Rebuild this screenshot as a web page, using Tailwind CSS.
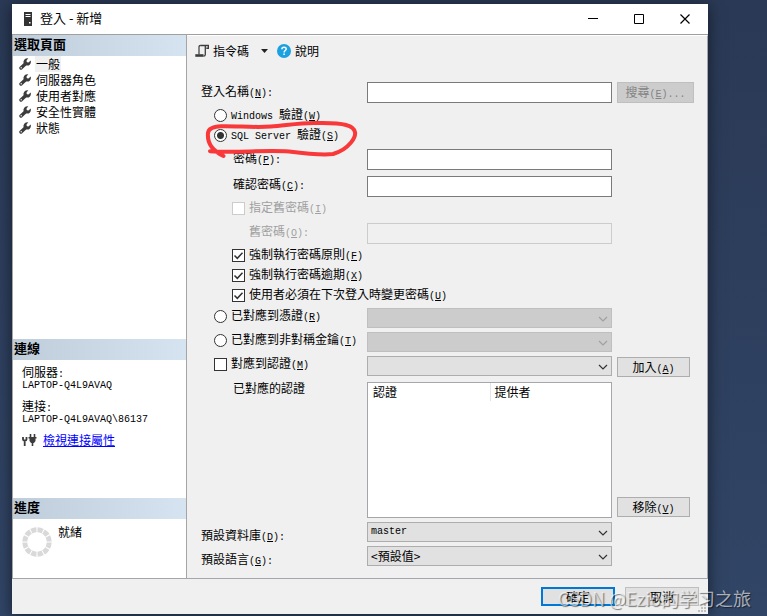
<!DOCTYPE html>
<html lang="zh-Hant">
<head>
  <meta charset="UTF-8" />
  <title>登入 - 新增</title>
  <script src="https://cdn.jsdelivr.net/npm/@tailwindcss/browser@4"></script>
</head>
<body class="relative h-screen overflow-hidden bg-linear-to-b from-[#2a3955] to-[#314566] pt-1 pr-[59px] pb-[2px] pl-3 font-['Noto_Sans_CJK_TC',sans-serif] text-xs text-black">

  <!-- Shared icons -->
  <svg class="hidden">
    <symbol id="wrench" viewBox="0 0 12 12">
      <path d="M2 10 6.500 5.800" stroke="#3c3c3c" stroke-width="3.400" stroke-linecap="round" />
      <path d="M9.300.3 7.500 2.600l.3 1.600 1.600.3 2.400-1.900c.5 2.700-.9 5-3.500 5C5.700 7.600 4.100 5.600 4.500 3.400 5 1.100 7.200-.2 9.300.3z" fill="#3c3c3c" />
      <circle cx="2.200" cy="9.800" r=".7" fill="#fff" />
    </symbol>
    <symbol id="chevron" viewBox="0 0 10 6">
      <path d="M1 1l4 4 4-4" fill="none" stroke="currentColor" stroke-width="1.2" />
    </symbol>
    <symbol id="check" viewBox="0 0 13 13">
      <path d="M2.500 6.500l2.800 2.800 5.200-5.600" fill="none" stroke="#333" stroke-width="1.500" />
    </symbol>
  </svg>

  <div class="flex h-full flex-col bg-[#f0f0f0] shadow-[0_2px_14px_rgba(0,0,0,0.55)]">

    <!-- Title bar -->
    <header class="flex h-[31px] shrink-0 items-center border-b border-[#a0a0a0] bg-white pl-3">
      <svg class="h-[14px] w-2" viewBox="0 0 8 14">
        <path d="M0 0h8v14H0z" fill="#333" />
        <path d="M1.500 2.500h5M1.500 4.500h5" stroke="#fff" />
        <path d="M5 10h1.500v1.500H5z" fill="#fff" />
      </svg>
      <h1 class="ml-2 flex-1 pb-[2px] text-[13px] leading-[18px]">登入 - 新增</h1>
      <button aria-label="最小化" class="flex h-[30px] w-[46px] items-center justify-center">
        <svg class="h-[11px] w-[11px]" viewBox="0 0 11 11"><path d="M0 4.500h10" stroke="#000" /></svg>
      </button>
      <button aria-label="最大化" class="flex h-[30px] w-[46px] items-center justify-center">
        <svg class="h-[11px] w-[11px]" viewBox="0 0 11 11"><path d="M.5.5h9v9h-9z" fill="none" stroke="#000" /></svg>
      </button>
      <button aria-label="關閉" class="flex h-[30px] w-[46px] items-center justify-center">
        <svg class="h-[11px] w-[11px]" viewBox="0 0 11 11"><path d="M.5.5l9 9M9.500.5l-9 9" stroke="#000" stroke-width="1.200" /></svg>
      </button>
    </header>

    <div class="flex min-h-0 flex-1 border-b border-[#a5a5ad]">

      <!-- Sidebar -->
      <aside class="flex w-[175px] shrink-0 flex-col border-x border-[#a5a5a5] bg-white">
        <nav class="flex-1">
          <h2 class="h-[21px] bg-linear-to-r from-[#bfcddb] to-[#d6e4f1] pl-px text-[13px] leading-[18px] font-bold">選取頁面</h2>
          <ul class="pl-[6px] leading-4">
            <li class="flex h-4 items-center gap-1"><svg class="h-3 w-3"><use href="#wrench" /></svg><a href="#" class="bg-[#f0f0f0] px-px">一般</a></li>
            <li class="flex h-4 items-center gap-1"><svg class="h-3 w-3"><use href="#wrench" /></svg><a href="#" class="px-px">伺服器角色</a></li>
            <li class="flex h-4 items-center gap-1"><svg class="h-3 w-3"><use href="#wrench" /></svg><a href="#" class="px-px">使用者對應</a></li>
            <li class="flex h-4 items-center gap-1"><svg class="h-3 w-3"><use href="#wrench" /></svg><a href="#" class="px-px">安全性實體</a></li>
            <li class="flex h-4 items-center gap-1"><svg class="h-3 w-3"><use href="#wrench" /></svg><a href="#" class="px-px">狀態</a></li>
          </ul>
        </nav>

        <section class="h-[159px]">
          <h2 class="h-[21px] bg-linear-to-r from-[#bfcddb] to-[#d6e4f1] pl-px text-[13px] leading-[18px] font-bold">連線</h2>
          <div class="px-[9px] pt-[6px] leading-3">
            <p class="h-[14px]">伺服器<span class="font-['Liberation_Mono',monospace] text-[10px]">:</span></p>
            <p class="h-3 font-['Liberation_Mono',monospace] text-[10px] leading-3">LAPTOP-Q4L9AVAQ</p>
            <p class="mt-2 h-[14px]">連接<span class="font-['Liberation_Mono',monospace] text-[10px]">:</span></p>
            <p class="h-3 font-['Liberation_Mono',monospace] text-[10px] leading-3">LAPTOP-Q4L9AVAQ\86137</p>
            <div class="mt-[6px] flex items-center gap-[6px]">
              <svg class="h-[14px] w-[15px]" viewBox="0 0 15 14">
                <path d="M1 4v2.500c0 1.500 3.500 1.500 3.500 0V4M2.700 7v6" fill="none" stroke="#3c3c3c" stroke-width="1.800" />
                <path d="M8.500 1v3M12.500 1v3M10.500 9v4" stroke="#3c3c3c" stroke-width="1.600" />
                <path d="M6.500 4h8v1.500h-1V8l-1.500 2H9L7.500 8V5.500h-1z" fill="#3c3c3c" />
              </svg>
              <a href="#" class="leading-4 text-[#0000ff] underline">檢視連接屬性</a>
            </div>
          </div>
        </section>

        <section class="h-20">
          <h2 class="h-[21px] bg-linear-to-r from-[#bfcddb] to-[#d6e4f1] pl-px text-[13px] leading-[18px] font-bold">進度</h2>
          <div class="flex gap-[6px] pt-[5px] pl-[9px]">
            <svg class="mt-[3px] h-[30px] w-[30px]" viewBox="0 0 30 30">
              <circle cx="15" cy="15" r="12.200" fill="none" stroke="#d9d9d9" stroke-width="5" pathLength="120" stroke-dasharray="8.300 1.700" stroke-dashoffset="-.85" />
            </svg>
            <p class="leading-4">就緒</p>
          </div>
        </section>
      </aside>

      <!-- General page -->
      <main class="relative flex min-w-0 flex-1 flex-col border-t border-r border-t-white border-r-[#a5a5ad]">
        <div class="flex h-[30px] items-center pl-2">
          <button class="flex items-center gap-1">
            <svg class="h-[14px] w-[14px]" viewBox="0 0 14 14" fill="none" stroke="#3c3c3c">
              <path d="M4 10.500V3C4 1.800 4.500 1.300 5.800 1.300" stroke-width="1.200" />
              <path d="M5.500 1.500h8v2.700h-2.200" stroke-width="1.500" />
              <path d="M10.300 2v8.500c0 1.200-.6 1.700-1.800 1.700" stroke-width="1.300" />
              <path d="M.3 11.500h8.200" stroke-width="2.600" />
            </svg>
            指令碼
            <svg class="ml-2 h-1 w-[7px]" viewBox="0 0 7 4"><path d="M0 0h7L3.500 4z" fill="#222" /></svg>
          </button>
          <button class="ml-[9px] flex items-center gap-1">
            <svg class="h-[14px] w-[14px]" viewBox="0 0 14 14">
              <circle cx="7" cy="7" r="7" fill="#1ba1e2" />
              <path d="M4.900 5.200C4.900 2.500 9.200 2.600 9.200 5c0 1.500-2.100 1.600-2.100 3.400" fill="none" stroke="#fff" stroke-width="1.500" />
              <path d="M6.300 9.500h1.600V11H6.300z" fill="#fff" />
            </svg>
            說明
          </button>
        </div>

        <form class="grid grid-cols-[161px_minmax(0,1fr)_77px] gap-x-[5px] pt-4 pr-[13px] pl-[14px] leading-[18px] whitespace-nowrap">
          <label for="login">登入名稱<span class="font-['Liberation_Mono',monospace] text-[10px]">(<u>N</u>):</span></label>
          <input id="login" type="text" class="h-[21px] border border-[#7a7a7a] bg-white px-1" />
          <button type="button" disabled class="h-[21px] border border-[#bfbfbf] bg-[#cccccc] text-[#838383]">搜尋<span class="font-['Liberation_Mono',monospace] text-[10px]">(<u>E</u>)...</span></button>

          <div class="col-span-3 mt-[2px] flex h-5 items-center gap-1 pl-[13px]">
            <input id="win" name="auth" type="radio" class="h-[13px] w-[13px] appearance-none rounded-full border border-[#333] bg-white" />
            <label for="win"><span class="font-['Liberation_Mono',monospace] text-[10px]">Windows </span>驗證<span class="font-['Liberation_Mono',monospace] text-[10px]">(<u>W</u>)</span></label>
          </div>
          <div class="col-span-3 flex h-5 items-center gap-1 pl-[13px]">
            <input id="sql" name="auth" type="radio" checked class="h-[13px] w-[13px] appearance-none rounded-full border border-[#333] bg-white checked:bg-[radial-gradient(circle,#333_3px,#fff_4px)]" />
            <label for="sql"><span class="font-['Liberation_Mono',monospace] text-[10px]">SQL Server </span>驗證<span class="font-['Liberation_Mono',monospace] text-[10px]">(<u>S</u>)</span></label>
          </div>

          <label for="pwd" class="mt-1 pl-8">密碼<span class="font-['Liberation_Mono',monospace] text-[10px]">(<u>P</u>):</span></label>
          <input id="pwd" type="password" class="mt-1 h-[21px] border border-[#7a7a7a] bg-white px-1" />

          <label for="confirm" class="col-start-1 mt-[5px] pl-8">確認密碼<span class="font-['Liberation_Mono',monospace] text-[10px]">(<u>C</u>):</span></label>
          <input id="confirm" type="password" class="mt-[6px] h-[21px] border border-[#7a7a7a] bg-white px-1" />

          <div class="col-span-3 mt-px flex h-5 items-center gap-1 pl-[31px] text-[#a0a0a0]">
            <input id="useold" type="checkbox" disabled class="h-[13px] w-[13px] appearance-none border border-[#cccccc] bg-white" />
            <label for="useold">指定舊密碼<span class="font-['Liberation_Mono',monospace] text-[10px]">(<u>I</u>)</span></label>
          </div>

          <label for="oldpwd" class="mt-1 pl-12 text-[#a0a0a0]">舊密碼<span class="font-['Liberation_Mono',monospace] text-[10px]">(<u>O</u>):</span></label>
          <input id="oldpwd" type="password" disabled class="mt-[5px] h-[21px] border border-[#cccccc] bg-[#f0f0f0] px-1" />

          <div class="col-span-3 mt-px flex h-5 items-center gap-1 pl-[31px]">
            <span class="grid h-[13px] w-[13px]">
              <input id="policy" type="checkbox" checked class="peer col-start-1 row-start-1 h-[13px] w-[13px] appearance-none border border-[#333] bg-white" />
              <svg class="pointer-events-none col-start-1 row-start-1 hidden h-[13px] w-[13px] peer-checked:block"><use href="#check" /></svg>
            </span>
            <label for="policy">強制執行密碼原則<span class="font-['Liberation_Mono',monospace] text-[10px]">(<u>F</u>)</span></label>
          </div>
          <div class="col-span-3 flex h-5 items-center gap-1 pl-[31px]">
            <span class="grid h-[13px] w-[13px]">
              <input id="expire" type="checkbox" checked class="peer col-start-1 row-start-1 h-[13px] w-[13px] appearance-none border border-[#333] bg-white" />
              <svg class="pointer-events-none col-start-1 row-start-1 hidden h-[13px] w-[13px] peer-checked:block"><use href="#check" /></svg>
            </span>
            <label for="expire">強制執行密碼逾期<span class="font-['Liberation_Mono',monospace] text-[10px]">(<u>X</u>)</span></label>
          </div>
          <div class="col-span-3 flex h-5 items-center gap-1 pl-[31px]">
            <span class="grid h-[13px] w-[13px]">
              <input id="change" type="checkbox" checked class="peer col-start-1 row-start-1 h-[13px] w-[13px] appearance-none border border-[#333] bg-white" />
              <svg class="pointer-events-none col-start-1 row-start-1 hidden h-[13px] w-[13px] peer-checked:block"><use href="#check" /></svg>
            </span>
            <label for="change">使用者必須在下次登入時變更密碼<span class="font-['Liberation_Mono',monospace] text-[10px]">(<u>U</u>)</span></label>
          </div>

          <div class="mt-[2px] flex h-[18px] items-center gap-1 pl-[13px]">
            <input id="cert" name="auth" type="radio" class="h-[13px] w-[13px] shrink-0 appearance-none rounded-full border border-[#333] bg-white" />
            <label for="cert">已對應到憑證<span class="font-['Liberation_Mono',monospace] text-[10px]">(<u>R</u>)</span></label>
          </div>
          <div class="relative mt-[3px]">
            <select aria-label="憑證" disabled class="block h-5 w-full appearance-none border border-[#bfbfbf] bg-[#cccccc] opacity-100"></select>
            <svg class="pointer-events-none absolute top-2 right-1 h-[6px] w-[10px] text-[#a0a0a0]"><use href="#chevron" /></svg>
          </div>

          <div class="col-start-1 mt-[3px] flex h-[18px] items-center gap-1 pl-[13px]">
            <input id="asym" name="auth" type="radio" class="h-[13px] w-[13px] shrink-0 appearance-none rounded-full border border-[#333] bg-white" />
            <label for="asym">已對應到非對稱金鑰<span class="font-['Liberation_Mono',monospace] text-[10px]">(<u>T</u>)</span></label>
          </div>
          <div class="relative mt-1">
            <select aria-label="非對稱金鑰" disabled class="block h-5 w-full appearance-none border border-[#bfbfbf] bg-[#cccccc] opacity-100"></select>
            <svg class="pointer-events-none absolute top-2 right-1 h-[6px] w-[10px] text-[#a0a0a0]"><use href="#chevron" /></svg>
          </div>

          <div class="col-start-1 mt-[3px] flex h-[18px] items-center gap-1 pl-[13px]">
            <input id="map" type="checkbox" class="h-[13px] w-[13px] shrink-0 appearance-none border border-[#333] bg-white" />
            <label for="map">對應到認證<span class="font-['Liberation_Mono',monospace] text-[10px]">(<u>M</u>)</span></label>
          </div>
          <div class="relative mt-1">
            <select aria-label="認證" class="block h-5 w-full appearance-none border border-[#adadad] bg-[#e1e1e1]"></select>
            <svg class="pointer-events-none absolute top-2 right-1 h-[6px] w-[10px] text-[#333]"><use href="#chevron" /></svg>
          </div>
          <button type="button" class="mt-[5px] mr-1 -mb-px h-5 border border-[#adadad] bg-[#e1e1e1]">加入<span class="font-['Liberation_Mono',monospace] text-[10px]">(<u>A</u>)</span></button>

          <p class="mt-[3px] pl-8">已對應的認證</p>
          <div class="mt-[6px] h-[136px] border border-[#a5a5ad] bg-white">
            <table class="w-full text-left">
              <thead>
                <tr>
                  <th class="w-[122px] border-r border-[#e5e5e5] pl-[5px] font-normal">認證</th>
                  <th class="pl-1 font-normal">提供者</th>
                </tr>
              </thead>
            </table>
          </div>
          <button type="button" class="mr-1 mb-px h-5 self-end border border-[#adadad] bg-[#e1e1e1]">移除<span class="font-['Liberation_Mono',monospace] text-[10px]">(<u>V</u>)</span></button>

          <label for="db" class="-mb-2 pt-2">預設資料庫<span class="font-['Liberation_Mono',monospace] text-[10px]">(<u>D</u>):</span></label>
          <div class="relative mt-1">
            <select id="db" class="block h-5 w-full appearance-none border border-[#adadad] bg-[#e1e1e1] px-[3px] font-['Liberation_Mono',monospace] text-[10px]"><option>master</option></select>
            <svg class="pointer-events-none absolute top-2 right-1 h-[6px] w-[10px] text-[#333]"><use href="#chevron" /></svg>
          </div>

          <label for="lang" class="col-start-1 -mb-2 pt-2">預設語言<span class="font-['Liberation_Mono',monospace] text-[10px]">(<u>G</u>):</span></label>
          <div class="relative mt-1">
            <select id="lang" class="block h-5 w-full appearance-none border border-[#adadad] bg-[#e1e1e1] px-[3px] leading-[18px]"><option>&lt;預設值&gt;</option></select>
            <svg class="pointer-events-none absolute top-2 right-1 h-[6px] w-[10px] text-[#333]"><use href="#chevron" /></svg>
          </div>
        </form>

        <!-- Hand-drawn marker around the chosen option -->
        <svg class="pointer-events-none absolute top-[84px] left-[15px] h-[40px] w-[160px]" viewBox="202 120 160 40" fill="none" stroke="#f9383a" stroke-width="4" stroke-linecap="round" stroke-linejoin="round">
          <path d="M223.500 156C213 151 207 143 208 133c.5-5 5-6.500 13-6.800 17-.4 32 1.600 50 .3 14-1 30-3.800 44-3.500 11 .3 22-.2 31 2 12 3 10.500 11 5 17.500-4.500 5.500-11 9.500-18 11.500-10 1.200-28-.5-44-2.500-26-1.500-54 1.500-79-.3" />
        </svg>
      </main>
    </div>

    <!-- Footer -->
    <footer class="relative flex h-[35px] shrink-0 items-start justify-end gap-[10px] pt-2 pr-[9px]">
      <button class="h-[19px] w-[74px] border-2 border-[#0078d7] bg-[#e1e1e1] leading-[15px]">確定</button>
      <button class="h-[19px] w-[74px] border border-[#bfbfbf] bg-[#e1e1e1] leading-[17px]">取消</button>
      <svg class="absolute right-[2px] bottom-[2px] h-2 w-2" viewBox="0 0 8 8" fill="#bfbfbf">
        <path d="M6 0h2v2H6zM3 3h2v2H3zM6 3h2v2H6zM0 6h2v2H0zM3 6h2v2H3zM6 6h2v2H6z" />
      </svg>
    </footer>
  </div>

  <p class="pointer-events-none absolute right-4 bottom-[6px] font-['Noto_Sans_CJK_SC',sans-serif] text-lg leading-6 whitespace-nowrap text-white/60 [text-shadow:1px_1px_1px_rgba(0,0,0,0.5)]">CSDN @Ezio的学习之旅</p>
</body>
</html>
